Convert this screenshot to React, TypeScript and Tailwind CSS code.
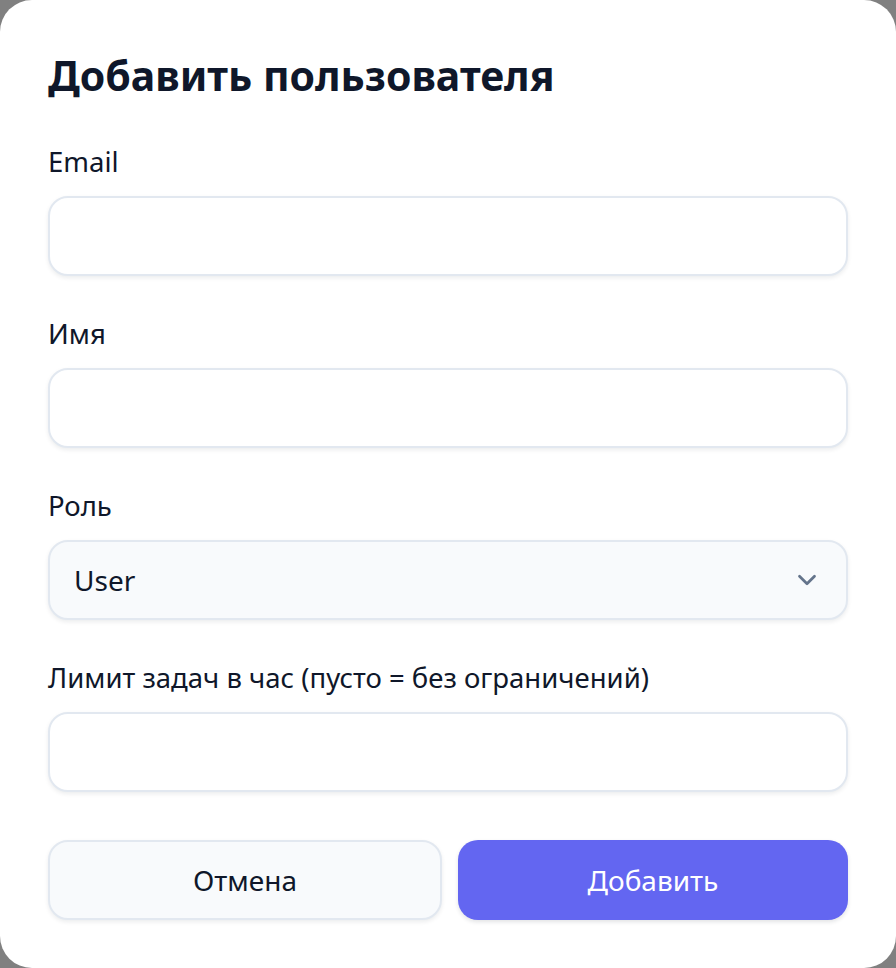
import { ChevronDown } from 'lucide-react'

const fields = [
  { label: 'Email', type: 'email' },
  { label: 'Имя', type: 'text' },
]

function Label({ children }: { children: React.ReactNode }) {
  return <label className="block text-[27.5px] leading-[32px] text-[#0f172a] pt-[2px] mb-[18px]">{children}</label>
}

function Input({ type = 'text' }: { type?: string }) {
  return (
    <input
      type={type}
      className="w-full h-[80px] px-[24px] rounded-[20px] bg-white border-2 border-[#e2e8f0] shadow-[0_2px_4px_rgba(15,23,42,0.08)] text-[28px] outline-none"
    />
  )
}

export default function App() {
  return (
    <div className="min-h-screen bg-[#808080]" style={{ fontFamily: '"Noto Sans", sans-serif' }}>
      <div className="h-[968px] w-[896px] bg-white rounded-[32px] px-[48px] pt-[48px] pb-[48px] flex flex-col">
        <h2 className="text-[41px] leading-[54px] font-bold text-[#0f172a] mb-[42px]">Добавить пользователя</h2>

        {fields.map((f) => (
          <div key={f.label} className="mb-[40px]">
            <Label>{f.label}</Label>
            <Input type={f.type} />
          </div>
        ))}

        <div className="mb-[40px]">
          <Label>Роль</Label>
          <div className="relative">
            <select className="appearance-none w-full h-[80px] pl-[24px] pr-[60px] rounded-[20px] bg-[#f8fafc] border-2 border-[#e2e8f0] shadow-[0_2px_4px_rgba(15,23,42,0.08)] text-[28px] text-[#0f172a] outline-none">
              <option>User</option>
              <option>Admin</option>
            </select>
            <ChevronDown className="absolute right-[26px] top-1/2 -translate-y-1/2 w-[30px] h-[30px] text-[#64748b] pointer-events-none" strokeWidth={2.2} />
          </div>
        </div>

        <div className="mb-[48px]">
          <Label>Лимит задач в час (пусто = без ограничений)</Label>
          <Input type="number" />
        </div>

        <div className="flex gap-[16px]">
          <button className="flex-1 h-[80px] rounded-[20px] bg-[#f8fafc] border-2 border-[#e2e8f0] shadow-[0_2px_4px_rgba(15,23,42,0.08)] text-[28px] text-[#0f172a]">
            Отмена
          </button>
          <button className="flex-1 h-[80px] rounded-[20px] bg-[#6366f1] shadow-[0_2px_4px_rgba(15,23,42,0.12)] text-[28px] text-white">
            Добавить
          </button>
        </div>
      </div>
    </div>
  )
}
